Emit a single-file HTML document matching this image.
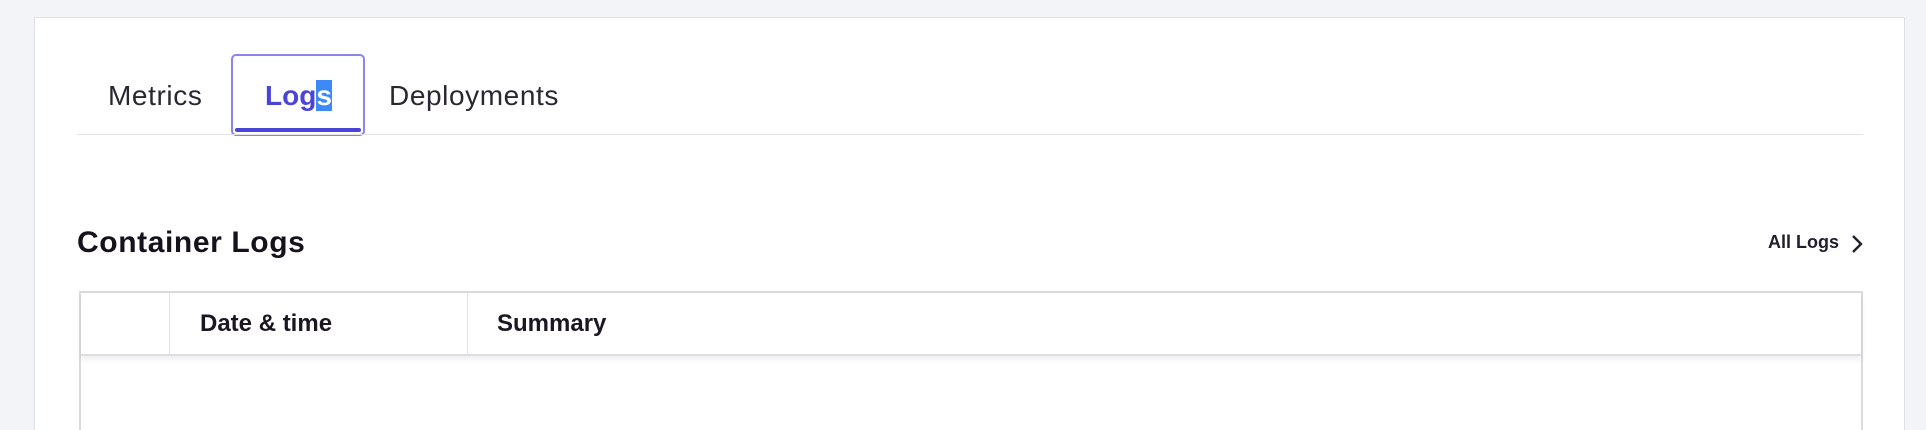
<!DOCTYPE html>
<html><head><style>
html,body{margin:0;padding:0;width:1926px;height:430px;overflow:hidden;background:#f3f4f8;font-family:"Liberation Sans",sans-serif;}
body{position:relative;}
.card{position:absolute;left:34px;top:17px;width:1871px;height:413px;background:#fff;border:1px solid #dfe0e6;border-bottom:none;box-sizing:border-box;}
.t{position:absolute;font-size:28px;letter-spacing:0.6px;color:#2a2733;top:80px;}
.logs{position:absolute;left:231px;top:54px;width:134px;height:82px;border:2px solid #8a84ef;border-radius:5px;box-sizing:border-box;}
.logs span{position:absolute;left:32px;top:24px;font-size:28px;font-weight:bold;color:#4b44d8;}
.logs i{position:absolute;left:2px;right:2px;bottom:2px;height:4px;background:#4b44d8;border-radius:2px;}
.div{position:absolute;left:77px;top:134px;width:1786px;height:1px;background:#e2e2e6;}
h2{position:absolute;left:77px;top:226px;margin:0;font-size:30px;letter-spacing:0.6px;font-weight:bold;color:#15121c;}
.all{position:absolute;left:1768px;top:232px;font-size:18px;font-weight:bold;color:#221e2c;}
.tbl{position:absolute;left:79px;top:291px;width:1784px;height:139px;border:2px solid #dadadf;border-bottom:none;box-sizing:border-box;}
.hd{position:absolute;left:0;top:0;right:0;height:61px;border-bottom:2px solid #dedee2;box-shadow:0 3px 6px rgba(0,0,0,.08);}
.c{position:absolute;top:0;height:61px;width:1px;background:#e3e3e7;}
.h{position:absolute;top:17px;font-size:24px;font-weight:bold;color:#1a1722;}
</style></head><body>
<div class="card"></div>
<div class="t" style="left:108px">Metrics</div>
<div class="logs"><span>Log<b style="background:#3d8af7;color:#fff;font-weight:bold">s</b></span><i></i></div>
<div class="t" style="left:389px">Deployments</div>
<div class="div"></div>
<h2>Container Logs</h2>
<div class="all">All Logs</div>
<svg style="position:absolute;left:1850px;top:233px" width="14" height="22" viewBox="0 0 14 22"><path d="M3 3l8 8-8 8" fill="none" stroke="#221e2c" stroke-width="2.4"/></svg>
<div class="tbl"><div class="hd">
<div class="c" style="left:88px"></div><div class="c" style="left:386px"></div>
<div class="h" style="left:119px">Date &amp; time</div>
<div class="h" style="left:416px">Summary</div>
</div></div>
</body></html>
